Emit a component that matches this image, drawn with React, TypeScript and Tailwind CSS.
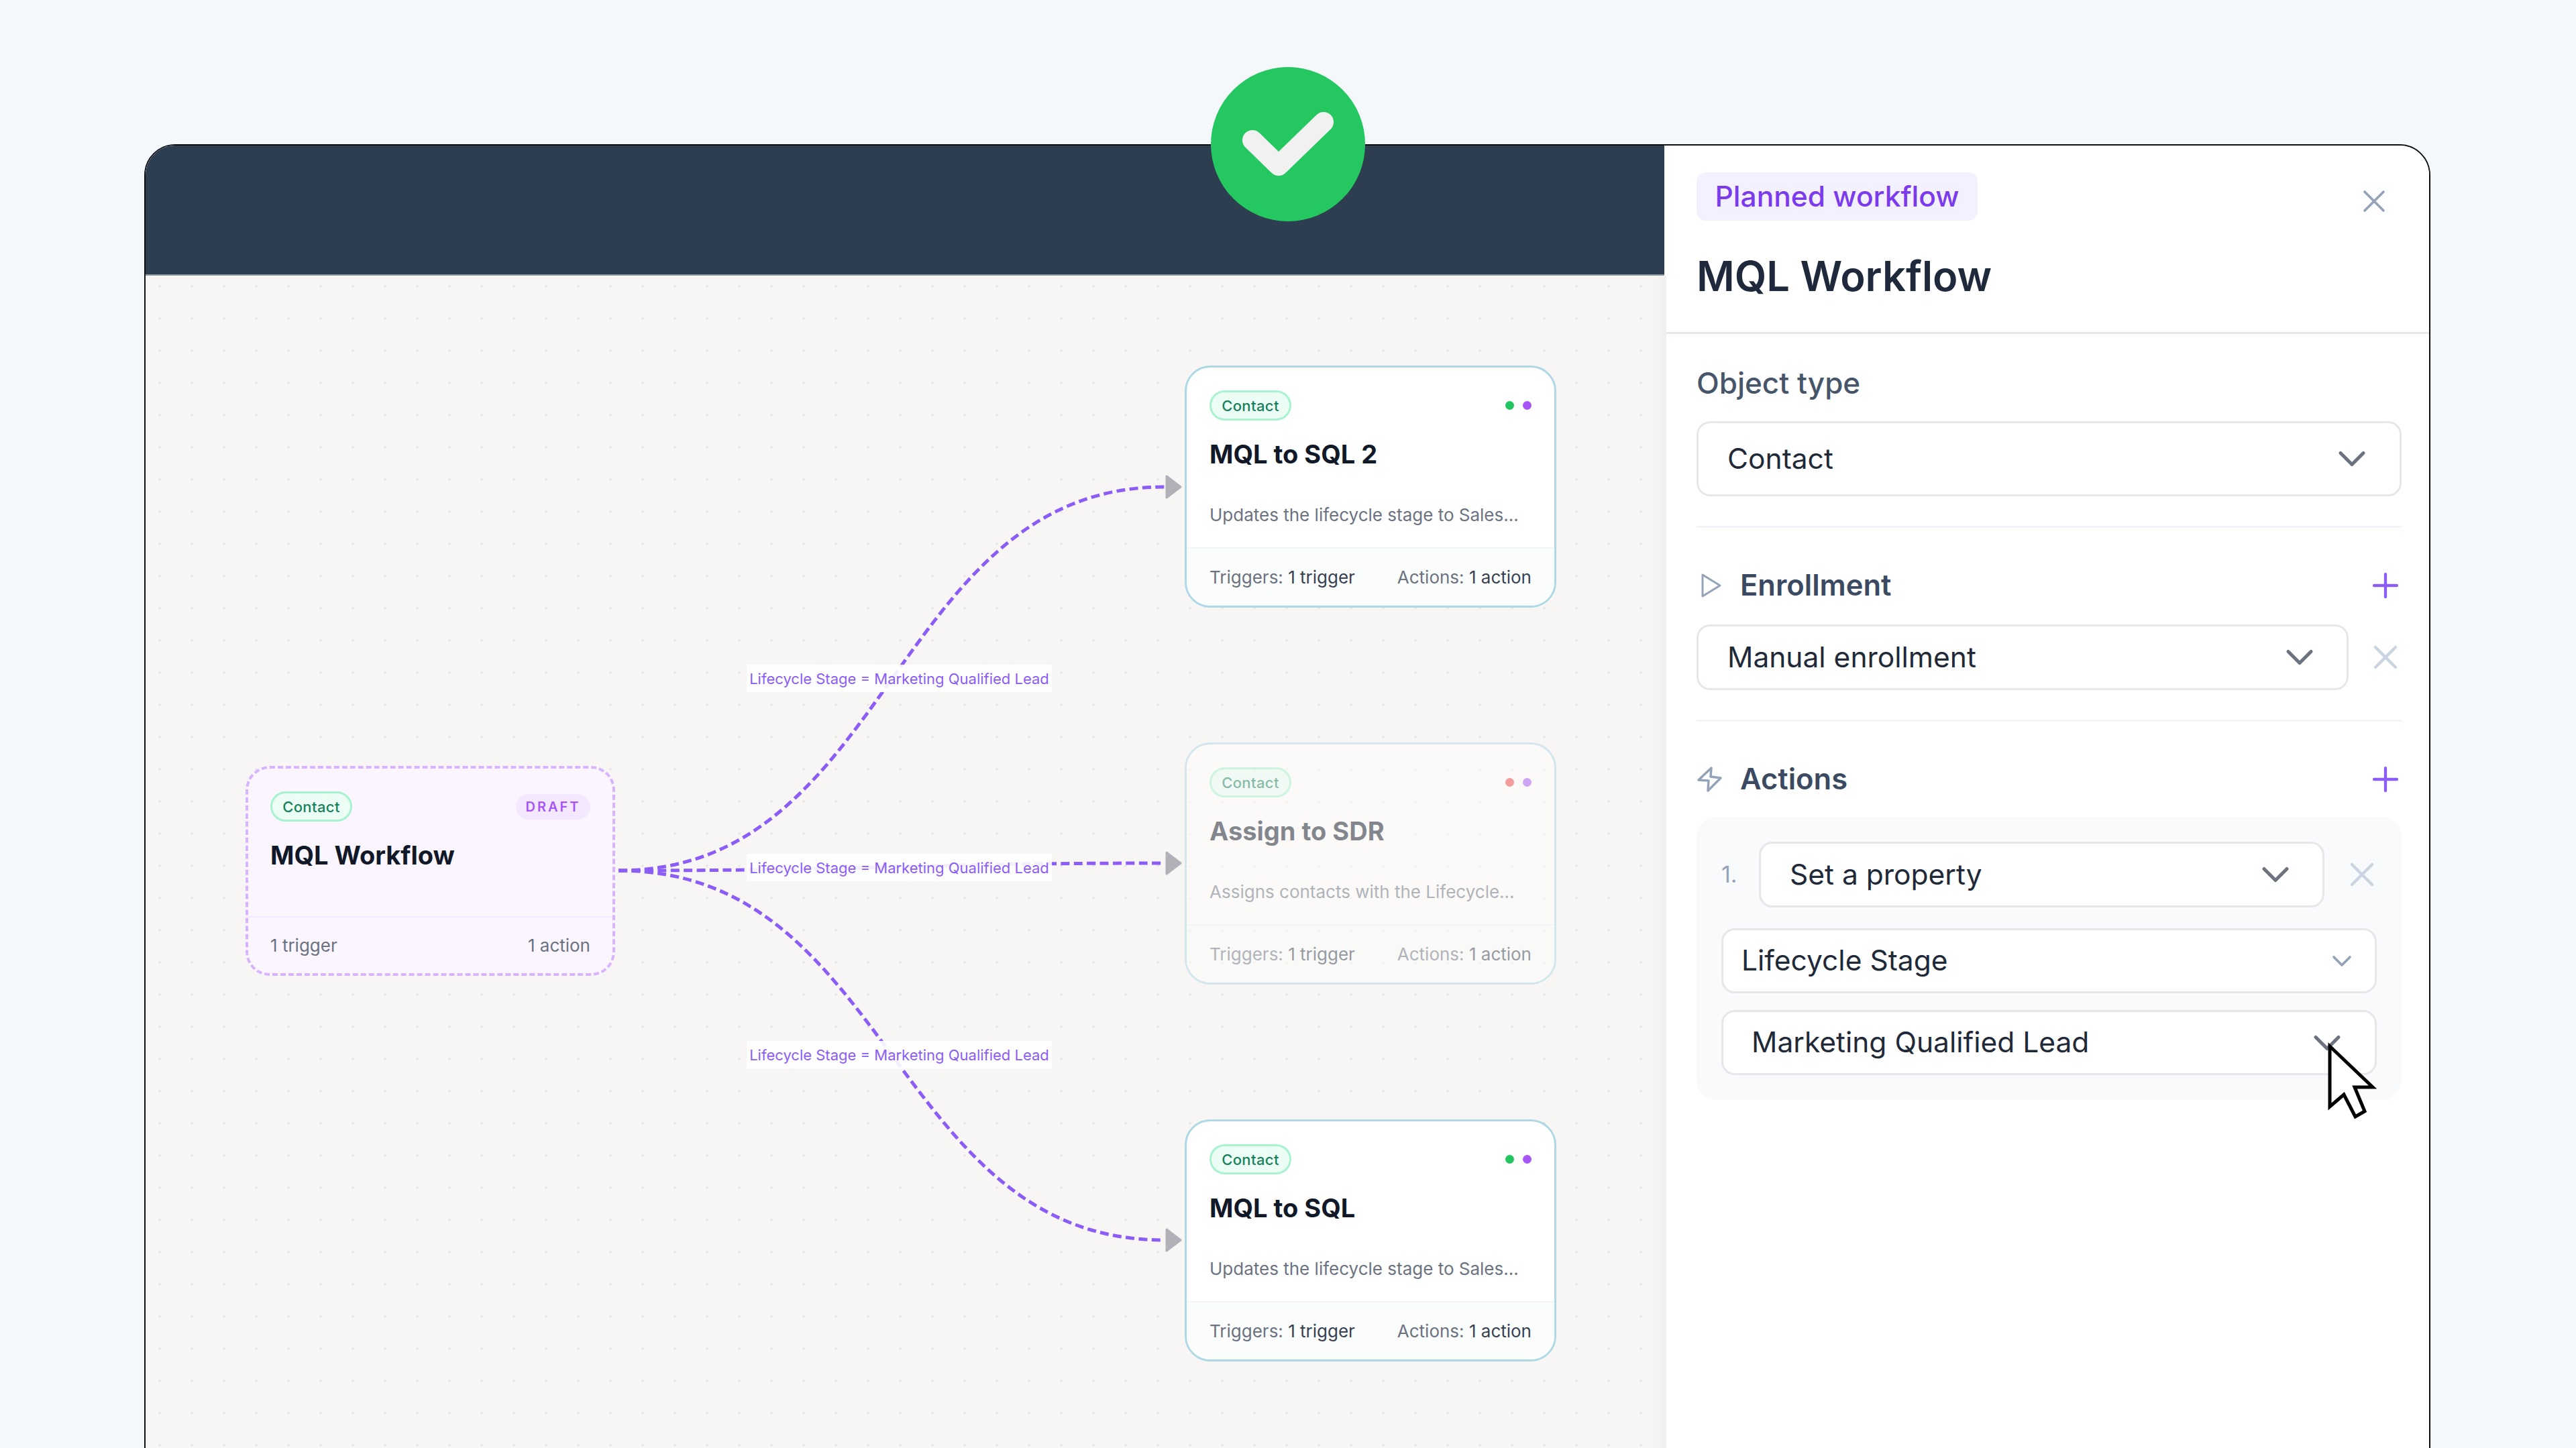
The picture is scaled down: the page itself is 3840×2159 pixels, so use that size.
import { ChevronDown, Plus, X } from 'lucide-react'

const sans = 'font-["Inter","Noto_Sans",sans-serif]'

function Select({ label, className, textClass = 'pl-[43px]', chevron = 'w-[68px] h-[68px]', chevronRight = 'pr-[36px]', chevronColor = 'text-[#6b7280]' }: {
  label: string
  className: string
  textClass?: string
  chevron?: string
  chevronRight?: string
  chevronColor?: string
}) {
  return (
    <div className={`flex shrink-0 items-center justify-between rounded-[20px] border-[3px] border-[#e5e7eb] bg-white ${chevronRight} ${className}`}>
      <span className={`text-[42.5px] leading-none text-[#1f2937] ${textClass}`}>{label}</span>
      <ChevronDown className={`${chevron} ${chevronColor}`} strokeWidth={1.8} />
    </div>
  )
}

function SectionHead({ icon, label }: { icon: React.ReactNode; label: string }) {
  return (
    <div className="flex h-[40px] items-center justify-between">
      <div className="flex items-center">
        <div className="flex w-[65px] items-center">{icon}</div>
        <span className="text-[43.5px] font-semibold leading-none text-[#3b4a60]">{label}</span>
      </div>
      <Plus className="mr-[-5px] h-[58px] w-[58px] text-[#8b5cf6]" strokeWidth={1.8} />
    </div>
  )
}

function Badge() {
  return (
    <span className="flex h-[45px] w-[122px] items-center justify-center rounded-full border-[3px] border-[#a7f3d0] bg-[#ecfdf5] text-[22px] font-medium leading-none tracking-[0.4px] text-[#15805a]">
      Contact
    </span>
  )
}

function WorkflowCard({ title, desc, pos, faded, dot }: {
  title: string
  desc: string
  pos: string
  faded?: boolean
  dot: string
}) {
  return (
    <div className={`absolute left-[1549px] flex h-[361px] w-[554px] flex-col overflow-hidden rounded-[38px] border-[3px] border-[#aed8e6] bg-white ${pos} ${faded ? 'opacity-50' : ''}`}>
      <div className="h-[268px] shrink-0 px-[34px] pt-[34px]">
        <div className="flex items-center justify-between">
          <Badge />
          <div className="flex gap-[13px]">
            <span className={`h-[13px] w-[13px] rounded-full ${dot}`} />
            <span className="h-[13px] w-[13px] rounded-full bg-[#a855f7]" />
          </div>
        </div>
        <div className="mt-[27px] text-[38px] font-bold leading-[46px] text-[#111827]">{title}</div>
        <div className="mt-[52px] text-[26px] leading-[32px] text-[#6b7280]">{desc}</div>
      </div>
      <div className="flex flex-1 items-center justify-between border-t-[2px] border-[#f1f5f5] bg-[#fbfdfd] px-[34px] text-[26px] leading-none text-[#6b7280]">
        <span>Triggers: <span className="text-[#374151]">1 trigger</span></span>
        <span>Actions: <span className="text-[#374151]">1 action</span></span>
      </div>
    </div>
  )
}

function EdgeLabel({ pos }: { pos: string }) {
  return (
    <div className={`absolute left-[896px] flex h-[41px] w-[455px] items-center justify-center whitespace-nowrap bg-white/90 text-[22px] leading-none text-[#8b5cf6] ${pos}`}>
      Lifecycle Stage = Marketing Qualified Lead
    </div>
  )
}

// canvas coords: page x - 217, page y - 411
const edgeEnds = [315, 876, 1438]

export default function App() {
  return (
    <div className={`relative h-[2159px] w-[3840px] overflow-hidden bg-[#f4f8fb] pl-[215px] pt-[215px] ${sans}`}>
      <div className="flex h-[1960px] w-[3408px] overflow-hidden rounded-t-[46px] border-2 border-[#0c1116]">
        {/* left column */}
        <div className="flex w-[2267px] shrink-0 flex-col bg-white">
          <div className="mr-[3px] h-[194px] shrink-0 border-b-2 border-[#8d98a3] bg-[#2d3e50]" />
          <div className="relative flex-1 bg-[#f7f6f4] bg-[radial-gradient(circle,#e9e7e4_1.5px,transparent_2px)] bg-[size:48px_48px] bg-[position:-3px_-8px] shadow-[inset_-24px_0_24px_-18px_rgba(0,0,0,0.04)]">
            <svg className="absolute inset-0 h-full w-full" fill="none">
              {edgeEnds.map((y) => (
                <g key={y}>
                  <path d={`M705 887 C1113 887 1113 ${y} 1519 ${y}`} stroke="#8b5cf6" strokeWidth="5" strokeDasharray="13 6.4" />
                  <polygon points={`1522,${y - 16} 1543,${y} 1522,${y + 16}`} fill="#b1b1b7" stroke="#b1b1b7" strokeWidth="3" strokeLinejoin="round" />
                </g>
              ))}
            </svg>

            <EdgeLabel pos="top-[580px]" />
            <EdgeLabel pos="top-[862px]" />
            <EdgeLabel pos="top-[1141px]" />

            {/* draft node */}
            <div className="absolute left-[149px] top-[731px] flex h-[313px] w-[551px] flex-col overflow-hidden rounded-[36px] border-4 border-dashed border-[#d8b4fe] bg-[#faf5ff]">
              <div className="h-[220px] shrink-0 px-[33px] pt-[34px]">
                <div className="flex items-center justify-between">
                  <Badge />
                  <span className="flex h-[38px] w-[111px] items-center justify-center rounded-full bg-[#f3e8ff] text-[20px] font-semibold leading-none tracking-[3px] text-[#a855f7]">
                    DRAFT
                  </span>
                </div>
                <div className="mt-[27px] text-[38px] font-bold leading-[46px] text-[#111827]">MQL Workflow</div>
              </div>
              <div className="flex flex-1 items-center justify-between border-t-[2px] border-[#f3e8ff] px-[33px] text-[26px] leading-none text-[#6b7280]">
                <span>1 trigger</span>
                <span>1 action</span>
              </div>
            </div>

            <WorkflowCard pos="top-[134px]" title="MQL to SQL 2" desc="Updates the lifecycle stage to Sales..." dot="bg-[#22c55e]" />
            <WorkflowCard pos="top-[696px]" title="Assign to SDR" desc="Assigns contacts with the Lifecycle..." dot="bg-[#ef4444]" faded />
            <WorkflowCard pos="top-[1258px]" title="MQL to SQL" desc="Updates the lifecycle stage to Sales..." dot="bg-[#22c55e]" />
          </div>
        </div>

        {/* side panel */}
        <div className="w-[1137px] shrink-0 bg-white">
          <div className="h-[281px] border-b-[3px] border-[#e5e7eb] pl-[45px] pr-[54px] pt-[40px]">
            <div className="flex items-start justify-between">
              <span className="flex h-[72px] w-[419px] items-center justify-center rounded-[14px] bg-[#f3f0ff] text-[42.5px] font-medium leading-none text-[#7c3aed]">
                Planned workflow
              </span>
              <X className="mt-[15px] h-[56px] w-[56px] text-[#94a3b8]" strokeWidth={1.6} />
            </div>
            <div className="mt-[47px] text-[61.5px] font-semibold leading-[72px] text-[#1e293b]">MQL Workflow</div>
          </div>

          <div className="pl-[45px] pr-[41px]">
            <div className="mt-[46px] text-[44px] font-medium leading-[54px] text-[#475569]">Object type</div>
            <Select className="mt-[30px] h-[112px]" label="Contact" chevronRight="pr-[37px]" />
            <div className="mt-[44px] h-[3px] bg-[#f1f5f9]" />

            <div className="mt-[66px]">
              <SectionHead
                label="Enrollment"
                icon={
                  <svg width="30" height="36" viewBox="0 0 30 36" fill="none" stroke="#94a3b8" strokeWidth="3" strokeLinejoin="round" className="ml-[7px]">
                    <path d="M2 2 L28 18 L2 34 Z" />
                  </svg>
                }
              />
            </div>
            <div className="mt-[38px] flex items-center justify-between">
              <Select className="h-[98px] w-[972px]" label="Manual enrollment" />
              <X className="mr-[-6px] h-[60px] w-[60px] shrink-0 text-[#cbd5e1]" strokeWidth={1.8} />
            </div>
            <div className="mt-[44px] h-[3px] bg-[#f1f5f9]" />

            <div className="mt-[66px]">
              <SectionHead
                label="Actions"
                icon={
                  <svg width="38" height="38" viewBox="0 0 38 38" fill="none" stroke="#94a3b8" strokeWidth="3.5" strokeLinejoin="round">
                    <path d="M22 2 L3 20 L18 21 L17 36 L36 17 L21 15 Z" />
                  </svg>
                }
              />
            </div>

            <div className="mt-[36px] h-[422px] rounded-[30px] bg-[#f8fafc] px-[37px] pt-[37px]">
              <div className="flex items-center">
                <span className="w-[56px] shrink-0 text-[34px] leading-none text-[#94a3b8]">1.</span>
                <Select className="h-[98px] w-[843px]" label="Set a property" />
                <X className="ml-[26px] mr-[-8px] h-[60px] w-[60px] shrink-0 text-[#cbd5e1]" strokeWidth={1.8} />
              </div>
              <Select className="mt-[31px] h-[97px]" textClass="pl-[27px]" label="Lifecycle Stage" chevron="h-[48px] w-[48px]" chevronRight="pr-[25px]" chevronColor="text-[#94a3b8]" />
              <Select className="mt-[25px] h-[97px]" textClass="pl-[42px]" label="Marketing Qualified Lead" chevronRight="pr-[37px]" />
            </div>
          </div>
        </div>
      </div>

      {/* success badge */}
      <div className="absolute left-[1805px] top-[100px] flex h-[230px] w-[230px] items-center justify-center rounded-full bg-[#25c760]">
        <svg width="230" height="230" viewBox="0 0 230 230" fill="none">
          <path d="M62 109 L101 147 L168 82" stroke="#f1f1f1" strokeWidth="30" strokeLinecap="round" strokeLinejoin="round" />
        </svg>
      </div>

      {/* mouse pointer */}
      <svg className="absolute left-[3460px] top-[1545px]" width="100" height="135" viewBox="3460 1545 100 135" fill="none">
        <path d="M3473 1560 V1650 L3494 1632 L3511 1665 L3525 1657 L3510 1621 H3537 Z" fill="#fff" stroke="#000" strokeWidth="5" strokeLinejoin="miter" />
      </svg>
    </div>
  )
}
